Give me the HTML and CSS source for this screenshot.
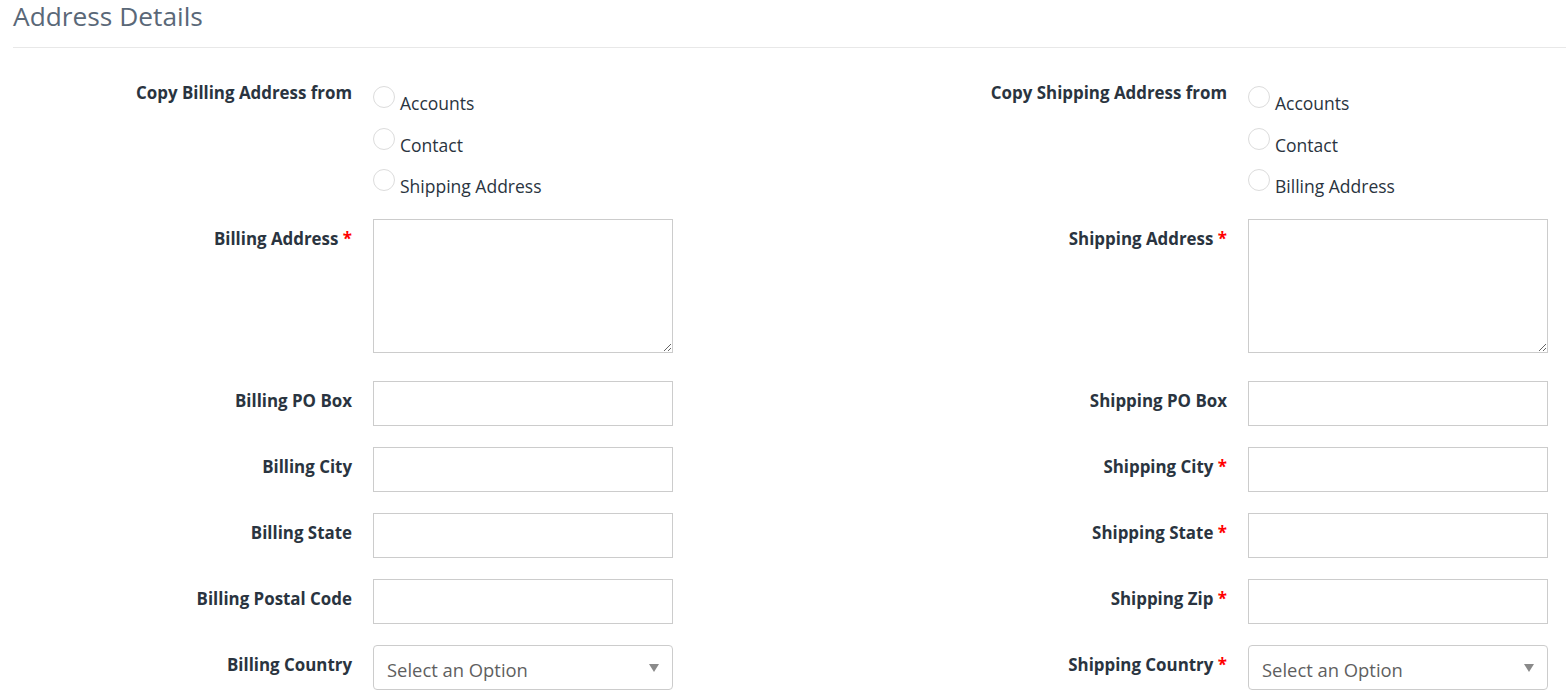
FILE: index.html
```html
<!DOCTYPE html>
<html>
<head>
<meta charset="utf-8">
<link rel="stylesheet" href="styles.css">
</head>
<body>
<div class="page">
  <h2 class="title">Address Details</h2>
  <div class="rule"></div>
  <div class="form">
    <div class="row row-radio">
      <div class="half">
        <div class="lbl">Copy Billing Address from</div>
        <div class="radios">
          <label class="opt"><span class="circle"></span><span class="opt-text">Accounts</span></label>
          <label class="opt"><span class="circle"></span><span class="opt-text">Contact</span></label>
          <label class="opt"><span class="circle"></span><span class="opt-text">Shipping Address</span></label>
        </div>
      </div>
      <div class="half">
        <div class="lbl">Copy Shipping Address from</div>
        <div class="radios">
          <label class="opt"><span class="circle"></span><span class="opt-text">Accounts</span></label>
          <label class="opt"><span class="circle"></span><span class="opt-text">Contact</span></label>
          <label class="opt"><span class="circle"></span><span class="opt-text">Billing Address</span></label>
        </div>
      </div>
    </div>

    <div class="row row-area">
      <div class="half">
        <div class="lbl">Billing Address <span class="req">*</span></div>
        <textarea class="area"></textarea>
      </div>
      <div class="half">
        <div class="lbl">Shipping Address <span class="req">*</span></div>
        <textarea class="area"></textarea>
      </div>
    </div>

    <div class="row">
      <div class="half">
        <div class="lbl">Billing PO Box</div>
        <input class="inp" type="text">
      </div>
      <div class="half">
        <div class="lbl">Shipping PO Box</div>
        <input class="inp" type="text">
      </div>
    </div>

    <div class="row">
      <div class="half">
        <div class="lbl">Billing City</div>
        <input class="inp" type="text">
      </div>
      <div class="half">
        <div class="lbl">Shipping City <span class="req">*</span></div>
        <input class="inp" type="text">
      </div>
    </div>

    <div class="row">
      <div class="half">
        <div class="lbl">Billing State</div>
        <input class="inp" type="text">
      </div>
      <div class="half">
        <div class="lbl">Shipping State <span class="req">*</span></div>
        <input class="inp" type="text">
      </div>
    </div>

    <div class="row">
      <div class="half">
        <div class="lbl">Billing Postal Code</div>
        <input class="inp" type="text">
      </div>
      <div class="half">
        <div class="lbl">Shipping Zip <span class="req">*</span></div>
        <input class="inp" type="text">
      </div>
    </div>

    <div class="row">
      <div class="half">
        <div class="lbl">Billing Country</div>
        <div class="sel"><span class="sel-text">Select an Option</span><span class="arrow"></span></div>
      </div>
      <div class="half">
        <div class="lbl">Shipping Country <span class="req">*</span></div>
        <div class="sel"><span class="sel-text">Select an Option</span><span class="arrow"></span></div>
      </div>
    </div>
  </div>
</div>
</body>
</html>
```

FILE: styles.css
```css
html, body {
  margin: 0;
  padding: 0;
  background: #fff;
  overflow: hidden;
}

body {
  font-family: "Open Sans", Lato, sans-serif;
  color: #2a3440;
}

.page {
  padding-left: 13px;
}

.title {
  margin: 0;
  padding-top: 0;
  height: 33px;
  font-size: 26.3px;
  line-height: 33px;
  font-weight: 400;
  color: #5a6878;
}

.rule {
  margin-top: 14px;
  height: 1px;
  background: #e8e8e8;
}

.form {
  padding-top: 25px;
}

.row {
  display: flex;
  margin-bottom: 21px;
}

.row-radio {
  margin-bottom: 8.5px;
}

.row-area {
  margin-bottom: 28px;
}

.half {
  display: flex;
  align-items: flex-start;
  flex: 0 0 875px;
}

.half + .half {
  flex: 1 1 auto;
  min-width: 0;
}

.lbl {
  width: 339px;
  flex: 0 0 339px;
  padding-top: 9px;
  margin-right: 21px;
  text-align: right;
  font-size: 16.9px;
  line-height: 22px;
  font-weight: 700;
  color: #2a3440;
}

.req {
  color: #ff0000;
}

.radios {
  padding-top: 13px;
  display: flex;
  flex-direction: column;
}

.opt {
  display: flex;
  align-items: flex-start;
  height: 41.5px;
}

.circle {
  width: 20px;
  height: 20px;
  border: 1px solid #dcdcdc;
  border-radius: 50%;
  margin-right: 5px;
  flex: 0 0 auto;
}

.opt-text {
  margin-top: 6px;
  font-size: 17.5px;
  line-height: 22px;
  color: #2a3440;
}

.area {
  box-sizing: border-box;
  width: 300px;
  height: 134px;
  border: 1px solid #cccccc;
  border-radius: 0;
  margin: 0;
  padding: 6px;
  font-family: inherit;
  resize: both;
}

.inp {
  box-sizing: border-box;
  width: 300px;
  height: 45px;
  border: 1px solid #cccccc;
  border-radius: 0;
  margin: 0;
  padding: 0 12px;
  font-family: inherit;
  font-size: 17px;
  outline: none;
}

.sel {
  box-sizing: border-box;
  width: 300px;
  height: 45px;
  border: 1px solid #cccccc;
  border-radius: 4px;
  display: flex;
  align-items: center;
  justify-content: space-between;
  padding: 3px 13px 0 13px;
}

.sel-text {
  font-size: 18.4px;
  color: #5f5f5f;
}

.arrow {
  width: 0;
  height: 0;
  border-left: 5px solid transparent;
  border-right: 5px solid transparent;
  border-top: 8px solid #8a8a8a;
  margin-top: -3px;
}
```
